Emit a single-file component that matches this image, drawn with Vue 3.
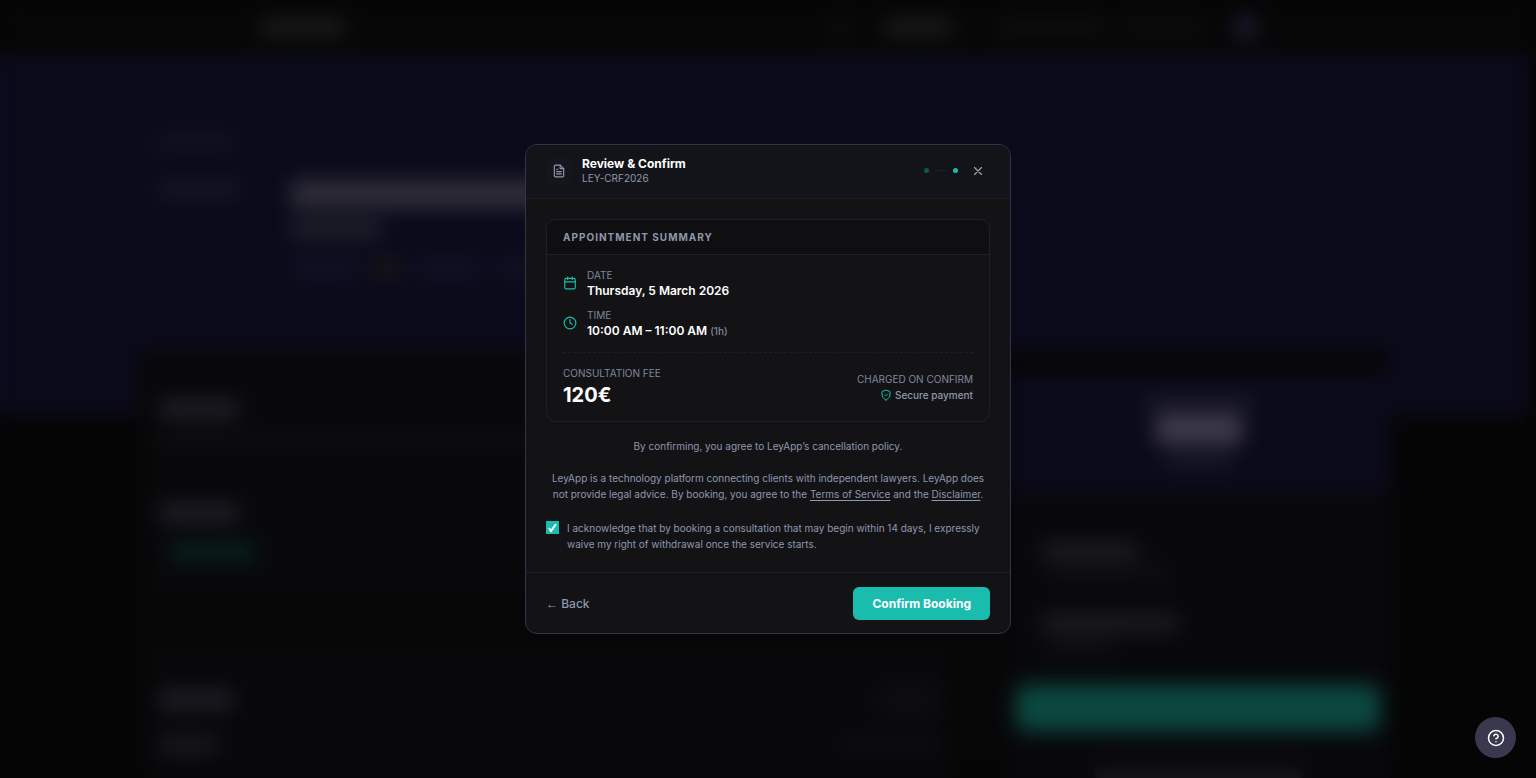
<script setup>
import { ref } from 'vue'

const open = ref(true)
const agreed = ref(true)
const rows = [
  { label: 'Date', value: 'Thursday, 5 March 2026', note: '', icon: 'calendar' },
  { label: 'Time', value: '10:00 AM – 11:00 AM', note: '(1h)', icon: 'clock' },
]
</script>

<template>
  <div class="screen">
    <div class="page" aria-hidden="true">
      <div class="nav">
        <div class="nav-inner">
          <i class="bar logo"></i>
          <i class="bar n1"></i>
          <i class="bar n2"></i>
          <i class="bar n3"></i>
          <i class="bar n4"></i>
          <i class="bar n5"></i>
        </div>
      </div>
      <div class="hero">
        <div class="hero-inner">
          <i class="bar crumb"></i>
          <div class="profile">
            <div class="avatar"><i class="bar tag"></i></div>
            <div class="who">
              <i class="bar name"></i>
              <i class="bar role"></i>
              <div class="meta">
                <i class="bar m1"></i><i class="bar m2"></i><i class="bar m1"></i><i class="bar m1"></i>
              </div>
            </div>
          </div>
        </div>
      </div>
      <div class="content">
        <div class="main-col">
          <div class="panel first">
            <i class="bar heading"></i>
            <i class="bar copy"></i>
            <i class="bar heading second"></i>
            <i class="bar chip"></i>
          </div>
          <div class="panel">
            <div class="split"><i class="bar heading short"></i><i class="bar faint"></i></div>
            <div class="split"><i class="bar item"></i><i class="bar faint wide"></i></div>
          </div>
        </div>
        <div class="side">
          <div class="price">
            <i class="bar over"></i>
            <i class="bar amount"></i>
            <i class="bar under"></i>
          </div>
          <div class="side-body">
            <i class="bar s1"></i>
            <i class="bar s2"></i>
            <i class="bar s3"></i>
            <i class="bar s4"></i>
            <i class="bar cta"></i>
            <i class="bar s5"></i>
          </div>
        </div>
      </div>
    </div>

    <div class="overlay">
      <section v-if="open" class="modal" role="dialog" aria-modal="true" aria-labelledby="dialog-title">
        <header class="modal-head">
          <span class="head-icon">
            <svg width="14" height="14" viewBox="0 0 24 24" fill="none" stroke="currentColor" stroke-width="2" stroke-linecap="round" stroke-linejoin="round">
              <path d="M14 2H6a2 2 0 0 0-2 2v16a2 2 0 0 0 2 2h12a2 2 0 0 0 2-2V8z" />
              <path d="M14 2v6h6M16 13H8M16 17H8M10 9H8" />
            </svg>
          </span>
          <div class="titles">
            <h2 id="dialog-title">Review &amp; Confirm</h2>
            <p>LEY-CRF2026</p>
          </div>
          <div class="steps"><span class="dot done"></span><span class="line"></span><span class="dot"></span></div>
          <button class="close" type="button" aria-label="Close" @click="open = false">
            <svg width="14" height="14" viewBox="0 0 24 24" fill="none" stroke="currentColor" stroke-width="2" stroke-linecap="round">
              <path d="M18 6 6 18M6 6l12 12" />
            </svg>
          </button>
        </header>

        <div class="modal-body">
          <div class="card">
            <h3>Appointment summary</h3>
            <div class="card-body">
              <div v-for="row in rows" :key="row.label" class="row">
                <svg v-if="row.icon === 'calendar'" width="14" height="14" viewBox="0 0 24 24" fill="none" stroke="currentColor" stroke-width="2" stroke-linecap="round" stroke-linejoin="round">
                  <rect x="3" y="4" width="18" height="18" rx="2" />
                  <path d="M16 2v4M8 2v4M3 10h18" />
                </svg>
                <svg v-else width="14" height="14" viewBox="0 0 24 24" fill="none" stroke="currentColor" stroke-width="2" stroke-linecap="round" stroke-linejoin="round">
                  <circle cx="12" cy="12" r="10" />
                  <path d="M12 6v6l4 2" />
                </svg>
                <div>
                  <p class="label">{{ row.label }}</p>
                  <p class="value">{{ row.value }} <small v-if="row.note">{{ row.note }}</small></p>
                </div>
              </div>
              <div class="fee">
                <div>
                  <p class="label">Consultation fee</p>
                  <p class="total">120€</p>
                </div>
                <div class="charge">
                  <p class="label">Charged on confirm</p>
                  <p class="secure">
                    <svg width="12" height="12" viewBox="0 0 24 24" fill="none" stroke="currentColor" stroke-width="2" stroke-linecap="round" stroke-linejoin="round">
                      <path d="M12 22s8-4 8-10V5l-8-3-8 3v7c0 6 8 10 8 10z" />
                      <path d="m9 12 2 2 4-4" />
                    </svg>
                    Secure payment
                  </p>
                </div>
              </div>
            </div>
          </div>
          <p class="fine">By confirming, you agree to LeyApp’s cancellation policy.</p>
          <p class="fine">
            LeyApp is a technology platform connecting clients with independent lawyers. LeyApp does
            not provide legal advice. By booking, you agree to the <a href="#terms">Terms of Service</a> and the
            <a href="#disclaimer">Disclaimer</a>.
          </p>
          <label class="consent">
            <span class="tick">
              <input v-model="agreed" type="checkbox" />
              <svg v-if="agreed" viewBox="0 0 13 13" fill="none" stroke="#fff" stroke-width="2"><path d="M3 7l2 3 5-7" /></svg>
            </span>
            <span>I acknowledge that by booking a consultation that may begin within 14 days, I expressly waive my right of withdrawal once the service starts.</span>
          </label>
        </div>

        <footer class="modal-foot">
          <button class="back" type="button"><span class="arrow">←</span> Back</button>
          <button class="confirm" type="button" :disabled="!agreed">Confirm Booking</button>
        </footer>
      </section>
    </div>

    <button class="help" type="button" aria-label="Help">
      <svg width="18" height="18" viewBox="0 0 24 24" fill="none" stroke="currentColor" stroke-width="2" stroke-linecap="round" stroke-linejoin="round">
        <circle cx="12" cy="12" r="10" />
        <path d="M9.09 9a3 3 0 0 1 5.83 1c0 2-3 3-3 3M12 17h.01" />
      </svg>
    </button>
  </div>
</template>

<style>
body {
  background: #050505;
}
</style>

<style scoped>
.screen {
  position: relative;
  height: 100vh;
  overflow: hidden;
  background: #050505;
  color: #8f97ac;
  font-family: Inter, "Liberation Sans", sans-serif;
  font-size: 10px;
  line-height: 16px;
}
p, h2, h3 { margin: 0; }
button { font: inherit; border: 0; padding: 0; cursor: pointer; }
svg { display: block; flex: none; }

/* Page behind the dialog */
.page { padding-right: 8px; }
.bar { display: block; flex: none; border-radius: 8px; background: #15151c; }
.nav { height: 54px; background: #060606; }
.nav-inner { display: flex; align-items: center; max-width: 1008px; height: 54px; margin: 0 auto; }
.logo { width: 86px; height: 18px; margin-right: auto; background: #1b1b1b; }
.n1 { width: 26px; height: 22px; margin-right: 28px; background: #0b0b0c; }
.n2 { width: 72px; height: 18px; margin-right: 42px; background: #1a1a1a; }
.n3 { width: 110px; height: 14px; margin-right: 12px; background: #101010; }
.n4 { width: 88px; height: 18px; margin-right: 28px; background: #0c0c0d; }
.n5 { width: 24px; height: 24px; margin-right: 10px; border-radius: 50%; background: #1e1c34; }
.hero { height: 361px; background: #0b0a1b; }
.hero-inner { max-width: 1248px; margin: 0 auto; padding-top: 80px; }
.crumb { width: 86px; height: 16px; margin-left: 12px; background: #13121f; }
.profile { display: flex; gap: 34px; margin-top: 30px; }
.avatar { width: 116px; height: 116px; }
.tag { width: 86px; height: 18px; margin-left: 16px; background: #161523; }
.who { flex: 1; }
.name { width: 420px; height: 28px; background: #2e2d38; }
.role { width: 92px; height: 18px; margin-top: 12px; background: #20202a; }
.meta { display: flex; gap: 12px; margin-top: 22px; }
.m1 { width: 72px; height: 16px; background: #131224; }
.m2 { width: 26px; height: 16px; background: #1b1a12; }
.content {
  display: flex;
  gap: 60px;
  max-width: 1252px;
  margin: -66px auto 0;
  background: #060607;
}
.main-col { flex: 1; }
.panel { margin-left: 8px; padding: 38px 8px 38px 12px; background: #08080a; }
.first { height: 162px; margin-bottom: 48px; padding-top: 50px; }
.heading { width: 82px; height: 20px; background: #1d1d26; }
.copy { width: 480px; height: 14px; margin-top: 14px; background: #0e0e11; }
.second { margin-top: 56px; }
.chip { width: 86px; height: 18px; margin: 20px 0 0 12px; background: #06221c; }
.short { width: 76px; }
.split { display: flex; justify-content: space-between; align-items: center; margin-bottom: 20px; }
.faint { width: 64px; height: 30px; background: #0d0d10; }
.wide { width: 100px; height: 18px; }
.item { width: 60px; height: 20px; background: #18181c; }
.side { width: 382px; padding-top: 26px; }
.price { display: flex; flex-direction: column; align-items: center; height: 96px; padding-top: 20px; background: #0b0a1b; }
.over { width: 116px; height: 14px; background: #191824; }
.amount { width: 88px; height: 32px; margin: 4px 0 8px; background: #3b394a; }
.under { width: 70px; height: 14px; background: #1a1924; }
.side-body { display: flex; flex-direction: column; padding: 50px 10px 0 8px; background: #08080b; }
.s1 { width: 100px; height: 20px; margin-left: 24px; background: #1a1a20; }
.s2 { width: 124px; height: 12px; margin: 6px 0 0 30px; background: #111113; }
.s3 { width: 140px; height: 20px; margin: 34px 0 0 24px; background: #1a1a20; }
.s4 { width: 70px; height: 12px; margin: 6px 0 0 30px; background: #121214; }
.cta { height: 46px; margin: 34px 0 36px; border-radius: 10px; background: #0b4840; }
.s5 { width: 210px; height: 12px; margin-left: 78px; background: #161618; }

.overlay {
  position: absolute;
  inset: 0;
  display: flex;
  align-items: center;
  justify-content: center;
  backdrop-filter: blur(10px);
}

/* Dialog */
.modal {
  box-sizing: border-box;
  width: 486px;
  max-width: 100%;
  overflow: hidden;
  border: 1px solid #35334a;
  border-radius: 12px;
  background: #131316;
}
.modal-head {
  display: flex;
  align-items: center;
  padding: 11px 20px 13px;
  border-bottom: 1px solid #1c1f29;
  background: #131419;
}
.head-icon {
  display: grid;
  place-items: center;
  width: 26px;
  height: 26px;
  margin-right: 10px;
  border-radius: 6px;
  background: #15151d;
}
.titles { flex: 1; }
.titles h2 { color: #fff; font-size: 12px; font-weight: 700; line-height: 15px; }
.titles p { line-height: 14px; }
.steps { display: flex; align-items: center; gap: 6px; }
.dot { width: 5px; height: 5px; border-radius: 50%; background: #1abcae; }
.done { background: #0e5850; }
.line { width: 12px; height: 1px; background: #1e2028; }
.close {
  display: grid;
  place-items: center;
  width: 24px;
  height: 24px;
  margin-left: 8px;
  background: none;
  color: #9aa3b8;
}
.modal-body { padding: 20px; }
.card { overflow: hidden; border: 1px solid #1f1e2b; border-radius: 10px; }
.card h3 {
  padding: 9px 16px;
  border-bottom: 1px solid #1f1e2b;
  background: #0f0f11;
  font-size: 10px;
  font-weight: 700;
  letter-spacing: 1px;
  text-transform: uppercase;
}
.card-body { padding: 12px 16px; }
.row { display: flex; align-items: center; gap: 10px; margin-bottom: 8px; color: #1abcae; }
.label { color: #7f879c; font-size: 10px; line-height: 16px; text-transform: uppercase; }
.value { color: #fff; font-size: 12px; font-weight: 600; line-height: 16px; }
.value small { color: #7f879c; font-size: 10px; font-weight: 500; }
.fee {
  display: flex;
  align-items: center;
  justify-content: space-between;
  margin-top: 13px;
  padding-top: 12px;
  border-top: 1px dashed #1f1e2b;
}
.total { color: #fff; font-size: 20px; font-weight: 700; line-height: 28px; }
.charge { text-align: right; }
.secure { display: flex; align-items: center; justify-content: flex-end; gap: 3px; font-weight: 500; }
.secure svg { color: #1abcae; }
.fine { margin-top: 16px; text-align: center; }
.fine a { color: inherit; text-underline-offset: 2px; }
.consent { display: flex; gap: 8px; margin-top: 18px; }
.tick { position: relative; flex: none; width: 13px; height: 13px; margin-top: 1px; }
.tick input {
  display: block;
  width: 13px;
  height: 13px;
  margin: 0;
  appearance: none;
  border: 1px solid #1abcae;
  background: #131316;
}
.tick input:checked { background: #1abcae; }
.tick svg { position: absolute; inset: 0; pointer-events: none; }
.modal-foot {
  display: flex;
  align-items: center;
  justify-content: space-between;
  padding: 14px 20px 13px;
  border-top: 1px solid #1f1e2b;
}
.back { background: none; color: #8f97ac; font-size: 12px; font-weight: 500; }
.arrow { font-family: "Liberation Sans", sans-serif; }
.confirm {
  height: 33px;
  padding: 0 19px;
  border-radius: 6px;
  background: #1abcae;
  color: #fff;
  font-size: 12px;
  font-weight: 700;
}
.help {
  position: absolute;
  right: 20px;
  bottom: 20px;
  display: grid;
  place-items: center;
  width: 41px;
  height: 41px;
  border-radius: 50%;
  background: #3a384e;
  color: #fff;
}
</style>
